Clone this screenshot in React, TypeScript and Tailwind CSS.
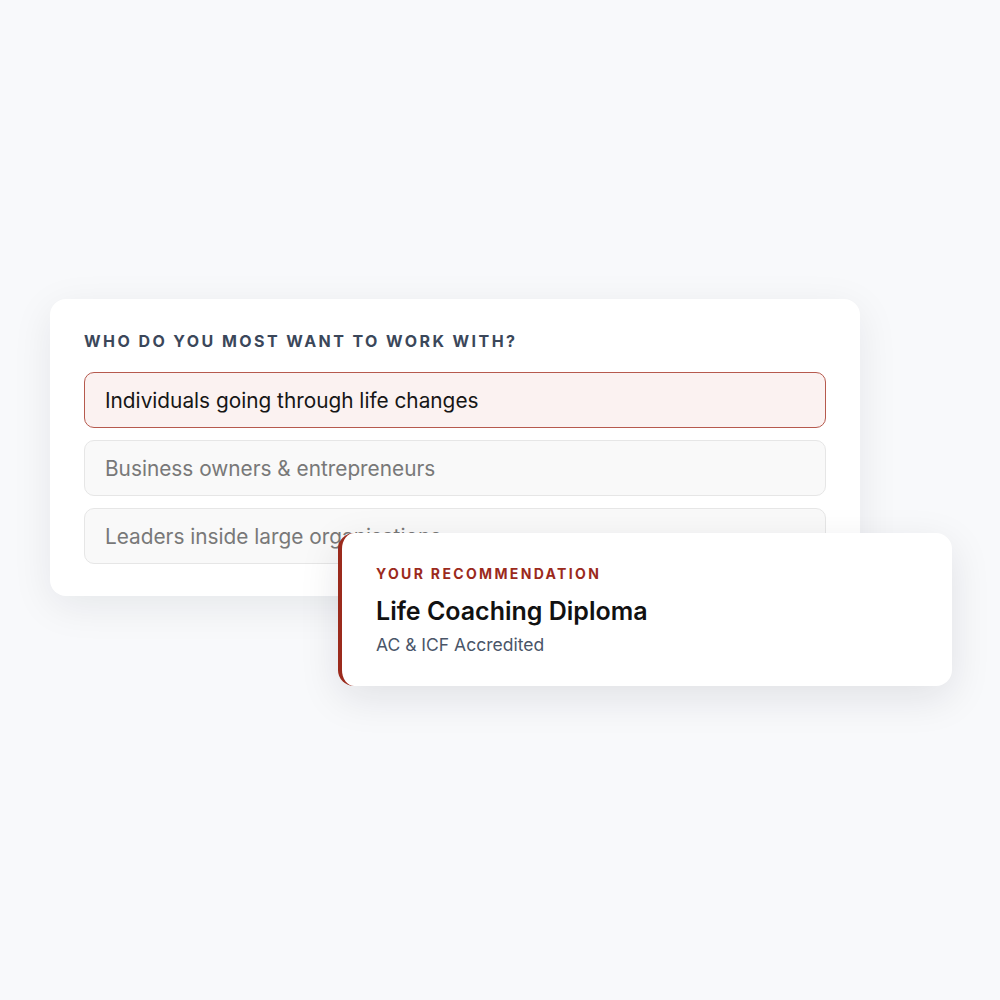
import React from "react";

const options = [
  { label: "Individuals going through life changes", selected: true },
  { label: "Business owners & entrepreneurs", selected: false },
  { label: "Leaders inside large organisations", selected: false },
];

export default function App() {
  return (
    <div className="min-h-[1000px] w-[1000px] bg-[#f8f9fb] pl-[50px] pt-[299px] font-['Inter',sans-serif]">
      <div className="relative w-[810px] rounded-[16px] bg-white px-[34px] pb-[32px] pt-[30px] shadow-[0_10px_40px_rgba(15,23,42,0.08)]">
        <h2 className="text-[16px] font-bold leading-[24px] tracking-[0.152em] text-[#3b475a]">
          WHO DO YOU MOST WANT TO WORK WITH?
        </h2>
        <div className="mt-[19px] flex flex-col gap-[12px]">
          {options.map((o) => (
            <div
              key={o.label}
              className={
                o.selected
                  ? "flex h-[56px] items-center rounded-[10px] border border-[#b65a4e] bg-[#fbf2f1] px-[20px] pt-[1px] text-[20.8px] text-[#161616]"
                  : "flex h-[56px] items-center rounded-[10px] border border-[#e6e6e6] bg-[#f9f9f9] px-[20px] pt-[1px] text-[20.8px] text-[#787878]"
              }
            >
              {o.label}
            </div>
          ))}
        </div>

        <div className="absolute left-[288px] top-[234px] flex h-[153px] w-[614px] flex-col rounded-[16px] border-l-[4px] border-[#9b2a1c] bg-white pl-[34px] pt-[31px] shadow-[0_12px_40px_rgba(15,23,42,0.10)]">
          <div className="text-[14px] font-bold leading-[20px] tracking-[0.167em] text-[#9b2a1c]">
            YOUR RECOMMENDATION
          </div>
          <div className="mt-[11px] text-[25px] font-semibold leading-[32px] text-[#111111]">
            Life Coaching Diploma
          </div>
          <div className="mt-[5px] text-[17.5px] leading-[26px] text-[#4a5568]">
            AC &amp; ICF Accredited
          </div>
        </div>
      </div>
    </div>
  );
}
